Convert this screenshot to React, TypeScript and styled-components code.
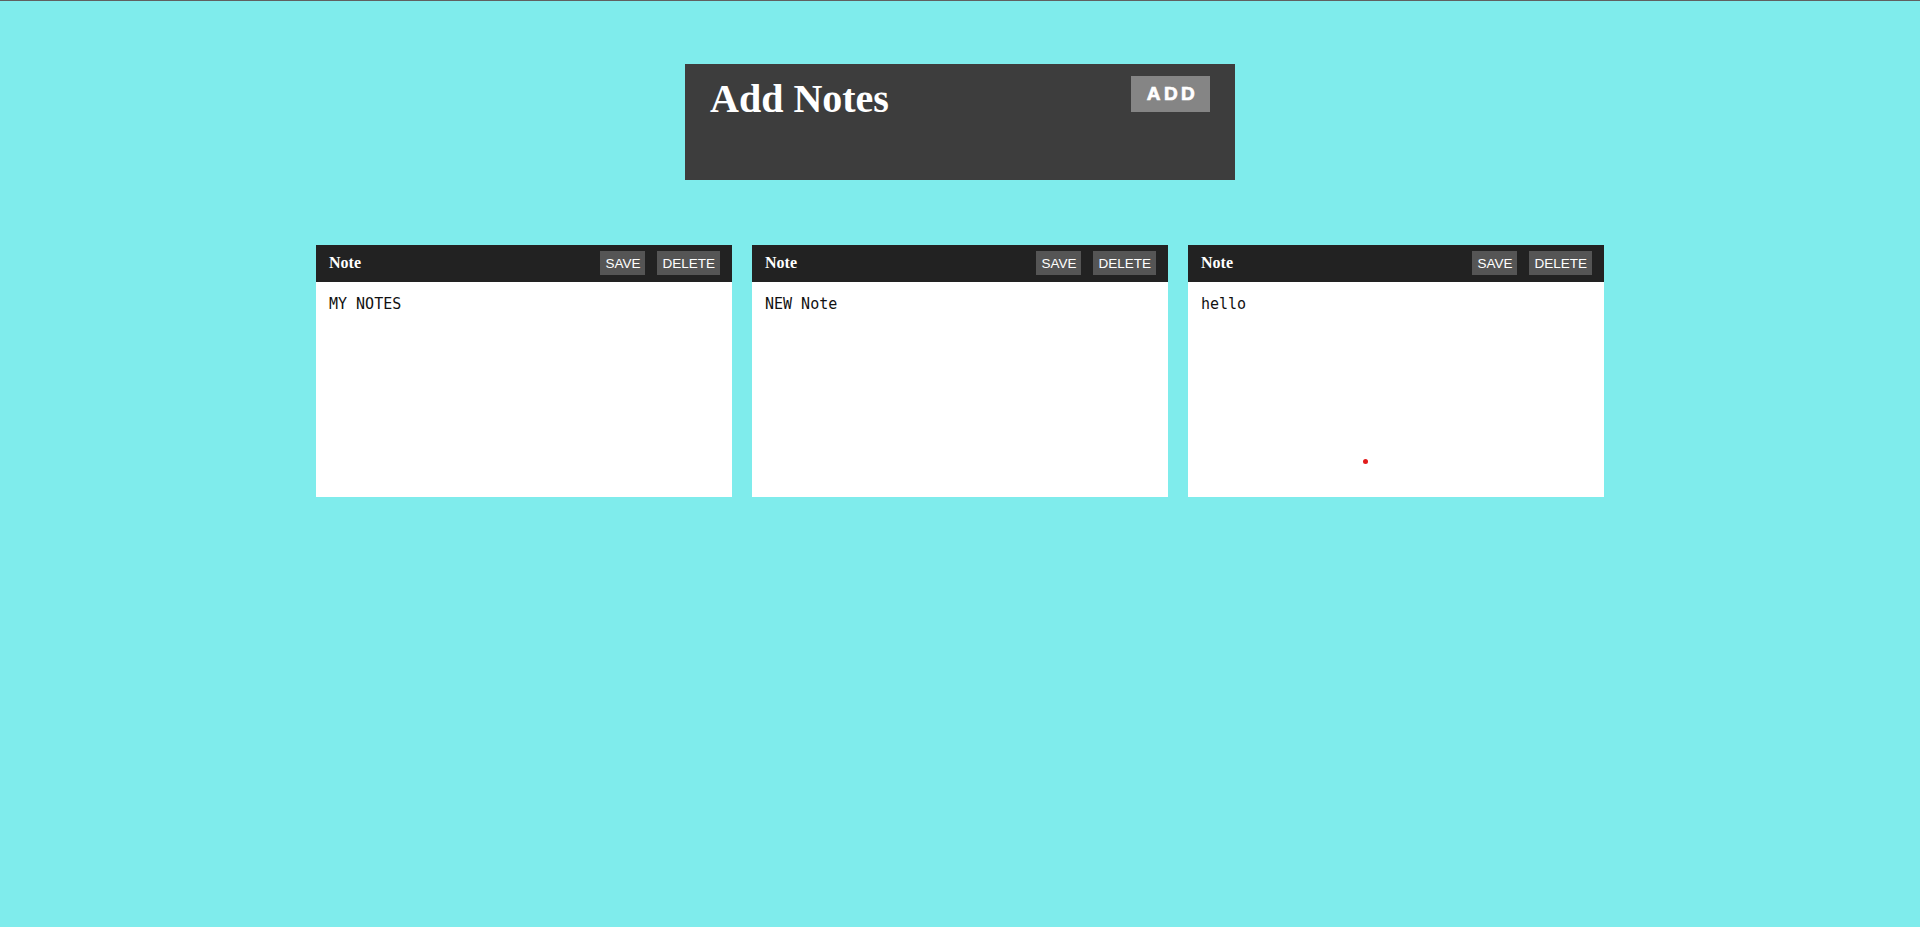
import React from "react";
import styled, { createGlobalStyle } from "styled-components";

const Global = createGlobalStyle`
  html, body {
    margin: 0;
    padding: 0;
    background: #7fecec;
  }
  body {
    border-top: 1px solid #606060;
    min-height: 926px;
    font-family: "Liberation Serif", serif;
  }
`;

const Page = styled.main`
  display: flex;
  flex-direction: column;
  align-items: center;
  padding-top: 63px;
`;

const AddPanel = styled.section`
  box-sizing: border-box;
  width: 550px;
  height: 116px;
  background: #3d3d3d;
  padding: 12px 21px 0 25px;
  display: flex;
  justify-content: space-between;
  align-items: flex-start;
`;

const Title = styled.h1`
  margin: -1px 0 0;
  font-family: "Liberation Serif", serif;
  font-weight: 700;
  font-size: 40px;
  color: #ffffff;
`;

const AddButton = styled.button`
  box-sizing: border-box;
  width: 79px;
  height: 36px;
  border: none;
  background: #858585;
  color: #ffffff;
  font-family: "Liberation Sans", Arial, sans-serif;
  font-weight: 900;
  font-size: 19px;
  letter-spacing: 3.5px;
  -webkit-text-stroke: 0.7px #ffffff;
  padding: 0 0 0 4px;
  margin-right: 4px;
`;

const NotesRow = styled.div`
  display: flex;
  gap: 20px;
  margin-top: 65px;
`;

const Card = styled.article`
  width: 416px;
  display: flex;
  flex-direction: column;
`;

const CardHeader = styled.header`
  box-sizing: border-box;
  height: 37px;
  background: #222222;
  display: flex;
  align-items: center;
  padding: 0 12px 1px 13px;
  gap: 12px;
`;

const CardTitle = styled.span`
  flex: 1;
  font-family: "Liberation Serif", serif;
  font-weight: 700;
  font-size: 16px;
  color: #ffffff;
`;

const SmallButton = styled.button`
  box-sizing: border-box;
  height: 24px;
  border: none;
  background: #555555;
  color: #ffffff;
  font-family: "Liberation Sans", Arial, sans-serif;
  font-size: 13.5px;
  padding: 0 5px;
`;

const CardBody = styled.div`
  position: relative;
  height: 215px;
  background: #ffffff;
`;

const NoteText = styled.textarea`
  box-sizing: border-box;
  display: block;
  width: 100%;
  height: 100%;
  border: none;
  outline: none;
  resize: none;
  overflow: hidden;
  background: transparent;
  padding: 13px;
  margin: 0;
  font-family: "DejaVu Sans Mono", monospace;
  font-size: 15px;
  color: #111111;
`;

const Dot = styled.span`
  position: absolute;
  left: 175px;
  top: 177px;
  width: 5px;
  height: 5px;
  border-radius: 50%;
  background: #e21b1b;
`;

const notes = [
  { text: "MY NOTES", dot: false },
  { text: "NEW Note", dot: false },
  { text: "hello", dot: true },
];

export default function App() {
  return (
    <>
      <Global />
      <Page>
        <AddPanel>
          <Title>Add Notes</Title>
          <AddButton>ADD</AddButton>
        </AddPanel>
        <NotesRow>
          {notes.map((n, i) => (
            <Card key={i}>
              <CardHeader>
                <CardTitle>Note</CardTitle>
                <SmallButton>SAVE</SmallButton>
                <SmallButton>DELETE</SmallButton>
              </CardHeader>
              <CardBody>
                <NoteText defaultValue={n.text} />
                {n.dot && <Dot />}
              </CardBody>
            </Card>
          ))}
        </NotesRow>
      </Page>
    </>
  );
}
